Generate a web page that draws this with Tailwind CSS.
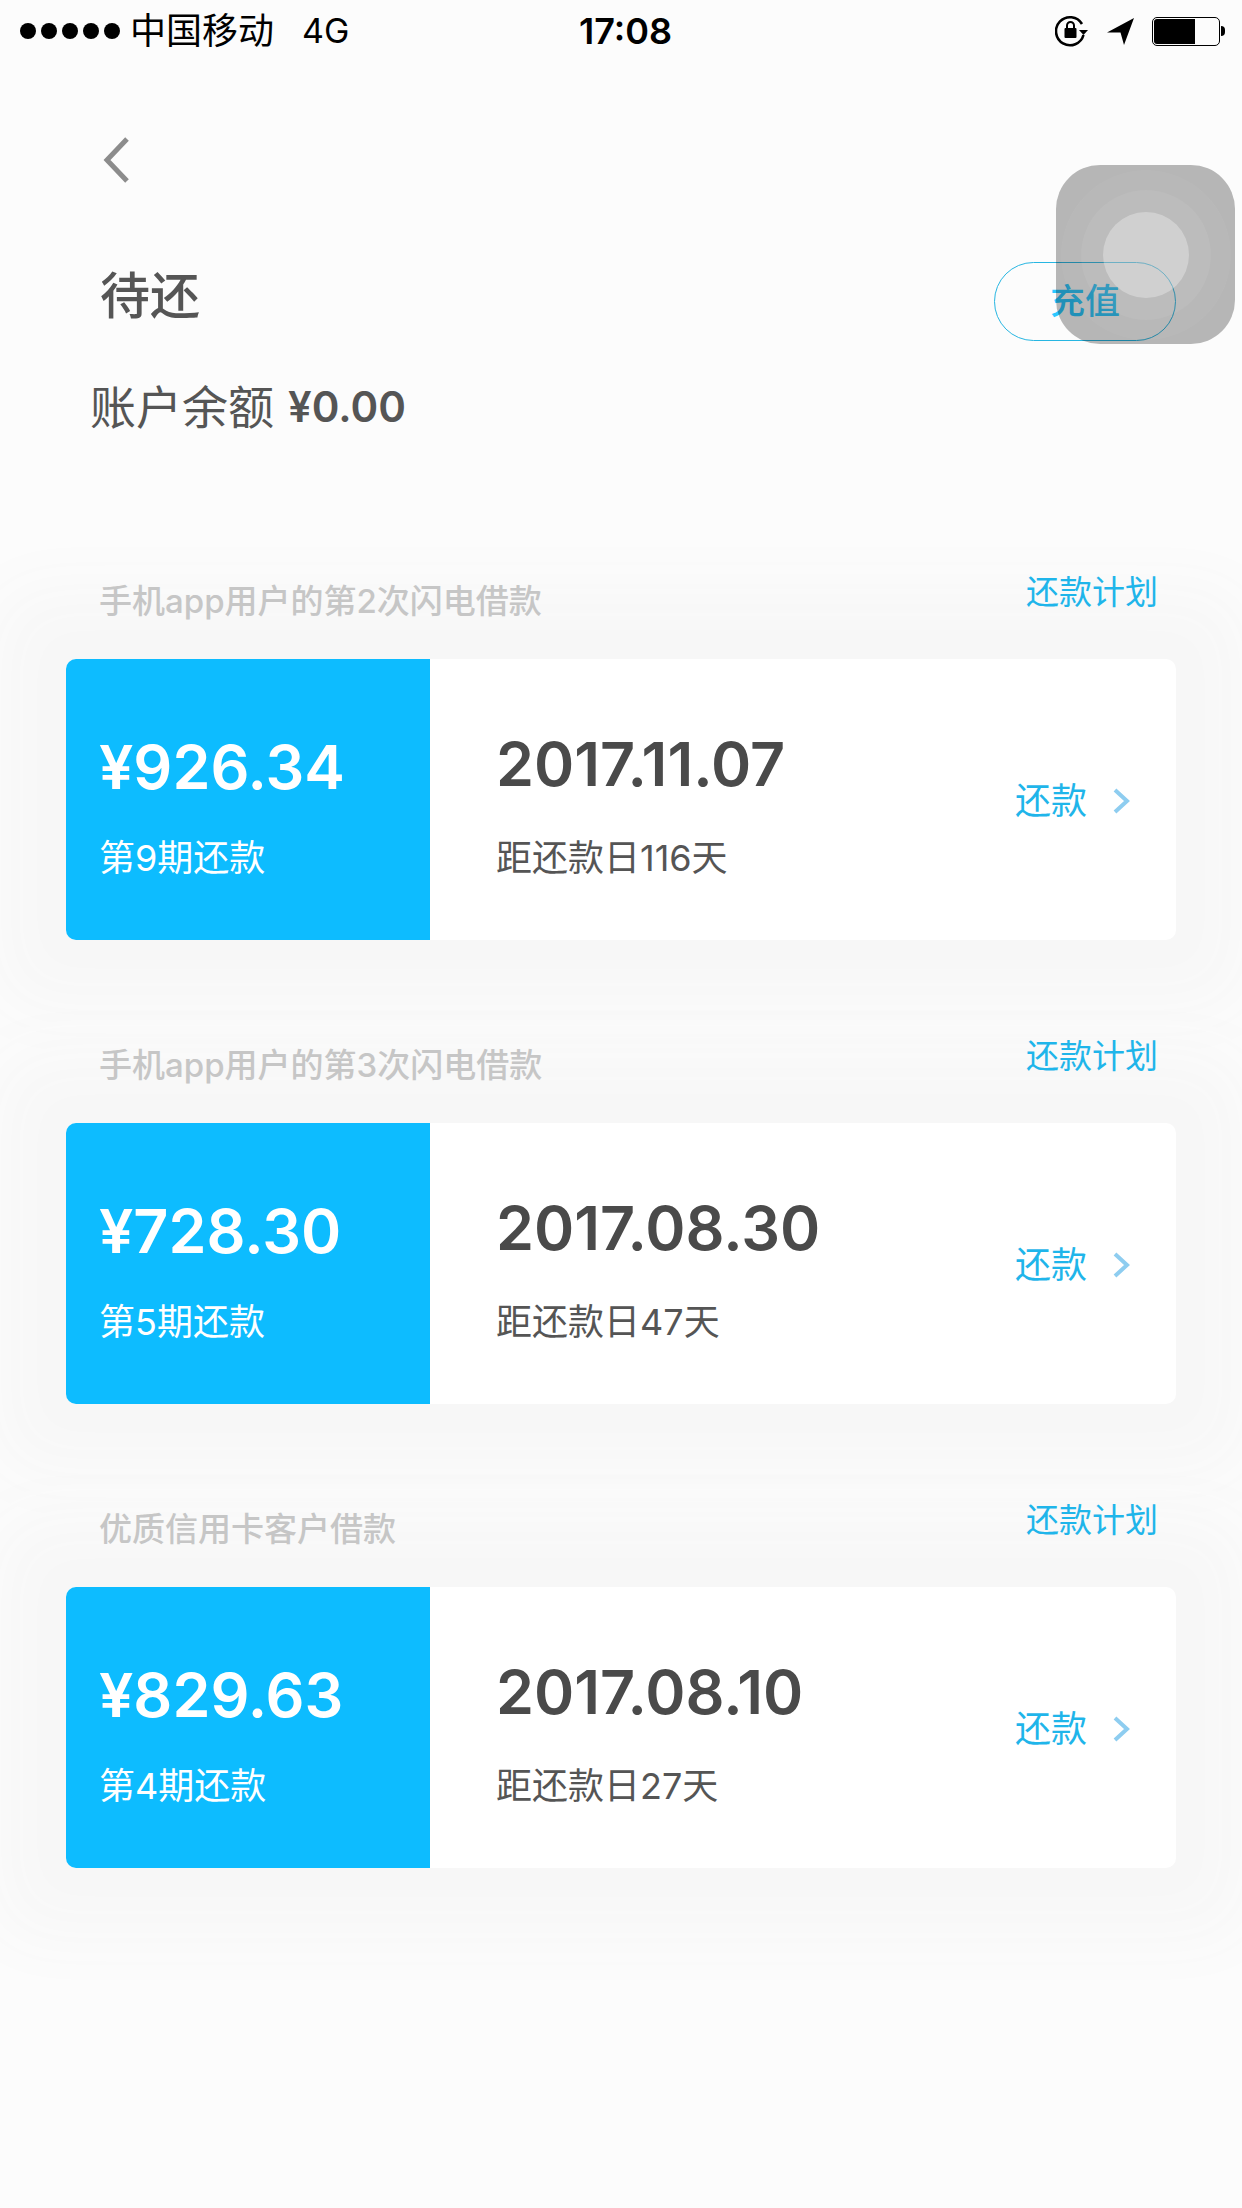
<!DOCTYPE html>
<html lang="zh-CN">
<head>
  <meta charset="UTF-8" />
  <title>待还</title>
  <script src="https://cdn.jsdelivr.net/npm/@tailwindcss/browser@4"></script>
</head>
<body class="bg-[#fcfcfc] font-['Inter','Noto_Sans_CJK_SC',sans-serif] overflow-hidden">
  <div class="relative w-[1242px] h-[2208px] overflow-hidden">

    <!-- Status bar -->
    <div class="relative flex items-center justify-between h-[62px] pl-[20px] pr-[17px] text-black">
      <div class="flex items-center">
        <div class="flex gap-[5px]">
          <span class="w-[16px] h-[16px] rounded-full bg-black"></span>
          <span class="w-[16px] h-[16px] rounded-full bg-black"></span>
          <span class="w-[16px] h-[16px] rounded-full bg-black"></span>
          <span class="w-[16px] h-[16px] rounded-full bg-black"></span>
          <span class="w-[16px] h-[16px] rounded-full bg-black"></span>
        </div>
        <span class="ml-[10px] text-[36px] leading-none">中国移动</span>
        <span class="ml-[28px] text-[34px] leading-none">4G</span>
      </div>
      <span class="absolute left-[579px] top-[12px] text-[36px] leading-[38px] font-semibold">17:08</span>
      <div class="flex items-center">
        <svg class="w-[35px] h-[32px]" viewBox="0 0 35 32" fill="none">
          <path d="M27 9A14 14 0 1 0 28.500 20" stroke="#000" stroke-width="2.600" />
          <path d="M24 15l9 0l-4.500 5z" fill="#000" />
          <rect x="9.500" y="13" width="12" height="10" rx="1" fill="#000" />
          <path d="M12 13V10.500a3.500 3.500 0 0 1 7 0V13" stroke="#000" stroke-width="2" />
        </svg>
        <svg class="ml-[17px] w-[28px] h-[28px]" viewBox="0 0 28 28">
          <path d="M27 1L0 15.500L13.500 15.500L17 28z" fill="#000" />
        </svg>
        <div class="ml-[17px] flex items-center">
          <div class="w-[68px] h-[29px] border-[1.500px] border-black rounded-[5px] p-[1px]">
            <div class="w-[41px] h-full bg-black rounded-l-[3px]"></div>
          </div>
          <div class="ml-[1px] w-[4px] h-[10px] bg-black rounded-r-full"></div>
        </div>
      </div>
    </div>

    <!-- Back -->
    <div class="pl-[102px] pt-[75px]">
      <svg class="block w-[28px] h-[46px]" viewBox="0 0 28 46" fill="none">
        <path d="M25 2L5 23L25 44" stroke="#8c8c8c" stroke-width="5" />
      </svg>
    </div>

    <!-- Heading -->
    <div class="flex items-start justify-between mt-[78px] pl-[100px] pr-[66px]">
      <h1 class="text-[50px] leading-[70px] font-medium text-[#555]">待还</h1>
      <button class="w-[182px] h-[79px] mt-[1px] rounded-full border-[1.500px] border-[#27b6e2] text-[35px] leading-none font-medium text-[#2cc8ff]">充值</button>
    </div>
    <div class="flex items-center mt-[36px] pl-[90px] text-[#555]">
      <span class="text-[46px] leading-[60px]">账户余额</span>
      <span class="ml-[14px] text-[42px] leading-[60px] font-semibold">¥0.00</span>
    </div>

    <!-- Loans -->
    <div class="flex flex-col gap-[83px] mt-[122px] px-[66px]">

      <section class="relative">
        <div class="relative z-10 flex justify-between h-[100px] pl-[33px] pr-[18px]">
          <span class="mt-[20px] text-[33px] leading-[44px] font-medium text-[#c6c6c6]">手机app用户的第2次闪电借款</span>
          <span class="mt-[11px] text-[33px] leading-[44px] text-[#1fb5ea]">还款计划</span>
        </div>
        <div class="flex h-[281px] rounded-[10px] bg-white overflow-hidden shadow-[0_0_70px_70px_#f7f7f7]">
          <div class="flex flex-col w-[364px] bg-[#0dbcff] pl-[33px] text-white">
            <span class="mt-[70px] text-[61px] leading-[76px] font-semibold">¥926.34</span>
            <span class="mt-[28px] text-[36px] leading-[50px]">第9期还款</span>
          </div>
          <div class="flex flex-col flex-1 pl-[66px] text-[#4a4a4a]">
            <span class="mt-[67px] text-[61px] leading-[76px] font-semibold">2017.11.07</span>
            <span class="mt-[31px] text-[36px] leading-[50px] text-[#555]">距还款日116天</span>
          </div>
          <div class="flex items-center pt-[3px] pr-[45px] text-[#1fb5ea]">
            <span class="text-[36px] leading-none">还款</span>
            <svg class="ml-[25px] w-[19px] h-[26px]" viewBox="0 0 19 26" fill="none">
              <path d="M3 2L15 13L3 24" stroke="#8ecdf0" stroke-width="4" />
            </svg>
          </div>
        </div>
      </section>

      <section class="relative">
        <div class="relative z-10 flex justify-between h-[100px] pl-[33px] pr-[18px]">
          <span class="mt-[20px] text-[33px] leading-[44px] font-medium text-[#c6c6c6]">手机app用户的第3次闪电借款</span>
          <span class="mt-[11px] text-[33px] leading-[44px] text-[#1fb5ea]">还款计划</span>
        </div>
        <div class="flex h-[281px] rounded-[10px] bg-white overflow-hidden shadow-[0_0_70px_70px_#f7f7f7]">
          <div class="flex flex-col w-[364px] bg-[#0dbcff] pl-[33px] text-white">
            <span class="mt-[70px] text-[61px] leading-[76px] font-semibold">¥728.30</span>
            <span class="mt-[28px] text-[36px] leading-[50px]">第5期还款</span>
          </div>
          <div class="flex flex-col flex-1 pl-[66px] text-[#4a4a4a]">
            <span class="mt-[67px] text-[61px] leading-[76px] font-semibold">2017.08.30</span>
            <span class="mt-[31px] text-[36px] leading-[50px] text-[#555]">距还款日47天</span>
          </div>
          <div class="flex items-center pt-[3px] pr-[45px] text-[#1fb5ea]">
            <span class="text-[36px] leading-none">还款</span>
            <svg class="ml-[25px] w-[19px] h-[26px]" viewBox="0 0 19 26" fill="none">
              <path d="M3 2L15 13L3 24" stroke="#8ecdf0" stroke-width="4" />
            </svg>
          </div>
        </div>
      </section>

      <section class="relative">
        <div class="relative z-10 flex justify-between h-[100px] pl-[33px] pr-[18px]">
          <span class="mt-[20px] text-[33px] leading-[44px] font-medium text-[#c6c6c6]">优质信用卡客户借款</span>
          <span class="mt-[11px] text-[33px] leading-[44px] text-[#1fb5ea]">还款计划</span>
        </div>
        <div class="flex h-[281px] rounded-[10px] bg-white overflow-hidden shadow-[0_0_70px_70px_#f7f7f7]">
          <div class="flex flex-col w-[364px] bg-[#0dbcff] pl-[33px] text-white">
            <span class="mt-[70px] text-[61px] leading-[76px] font-semibold">¥829.63</span>
            <span class="mt-[28px] text-[36px] leading-[50px]">第4期还款</span>
          </div>
          <div class="flex flex-col flex-1 pl-[66px] text-[#4a4a4a]">
            <span class="mt-[67px] text-[61px] leading-[76px] font-semibold">2017.08.10</span>
            <span class="mt-[31px] text-[36px] leading-[50px] text-[#555]">距还款日27天</span>
          </div>
          <div class="flex items-center pt-[3px] pr-[45px] text-[#1fb5ea]">
            <span class="text-[36px] leading-none">还款</span>
            <svg class="ml-[25px] w-[19px] h-[26px]" viewBox="0 0 19 26" fill="none">
              <path d="M3 2L15 13L3 24" stroke="#8ecdf0" stroke-width="4" />
            </svg>
          </div>
        </div>
      </section>
    </div>

    <!-- AssistiveTouch overlay -->
    <div class="absolute z-20 left-[1056px] top-[165px] flex items-center justify-center w-[179px] h-[179px] rounded-[44px] bg-black/28">
      <div class="flex items-center justify-center w-[170px] h-[170px] rounded-full bg-white/4">
        <div class="flex items-center justify-center w-[130px] h-[130px] rounded-full bg-white/6">
          <div class="w-[86px] h-[86px] rounded-full bg-white/30"></div>
        </div>
      </div>
    </div>
  </div>
</body>
</html>
